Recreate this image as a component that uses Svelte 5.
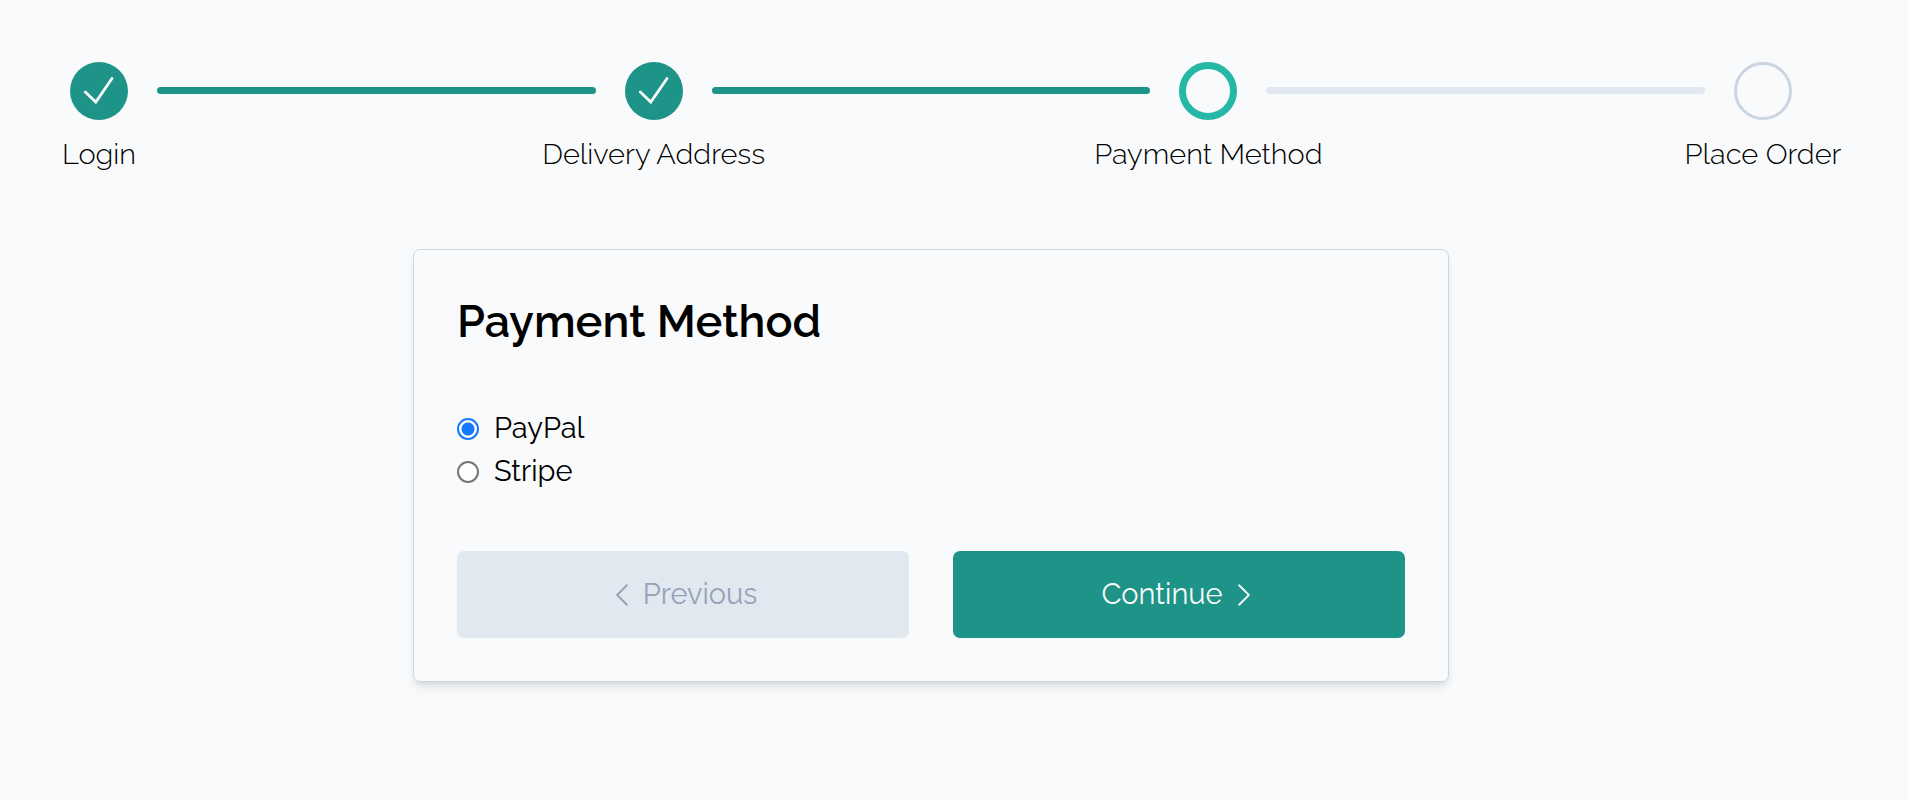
<script>
  const steps = [
    { label: 'Login', state: 'done' },
    { label: 'Delivery Address', state: 'done' },
    { label: 'Payment Method', state: 'current' },
    { label: 'Place Order', state: 'todo' },
  ];
  const methods = ['PayPal', 'Stripe'];
  let method = $state('PayPal');
</script>

<main>
  <ol class="steps">
    {#each steps as step, i}
      {#if i > 0}
        <li class="line" class:filled={steps[i - 1].state === 'done'} aria-hidden="true"></li>
      {/if}
      <li class="step" aria-current={step.state === 'current' ? 'step' : undefined}>
        <span class="circle {step.state}">
          {#if step.state === 'done'}
            <svg viewBox="0 0 58 58" aria-hidden="true">
              <path d="M15.3 30 L25.8 40 L42 16.5" />
            </svg>
          {/if}
        </span>
        <span class="label">{step.label}</span>
      </li>
    {/each}
  </ol>

  <form class="card" onsubmit={(e) => e.preventDefault()}>
    <h1>Payment Method</h1>
    <div class="options">
      {#each methods as name}
        <label>
          <input type="radio" name="method" value={name} bind:group={method} />
          {name}
        </label>
      {/each}
    </div>
    <div class="actions">
      <button type="button" class="previous">
        <svg viewBox="0 0 16 16" aria-hidden="true"><path d="M11 2 L5 8 L11 14" /></svg>
        Previous
      </button>
      <button type="submit" class="continue">
        Continue
        <svg viewBox="0 0 16 16" aria-hidden="true"><path d="M5 2 L11 8 L5 14" /></svg>
      </button>
    </div>
  </form>
</main>

<style>
  :global(body) {
    margin: 0;
    background: #f8fafc;
  }

  main {
    padding: 62px 116px 62px 70px;
    font-family: Raleway, Lato, sans-serif;
    font-size: 29px;
    line-height: 43px;
    color: #000;
  }

  .steps {
    display: flex;
    align-items: flex-start;
    gap: 29px;
    margin: 0 0 73px;
    padding: 0;
    list-style: none;
  }

  .step {
    flex: none;
    width: 58px;
    display: flex;
    flex-direction: column;
    align-items: center;
    gap: 13px;
  }

  .circle {
    box-sizing: border-box;
    width: 58px;
    height: 58px;
    border-radius: 50%;
  }

  .circle svg {
    display: block;
    fill: none;
    stroke: #f8fafc;
    stroke-width: 2.8;
    stroke-linecap: round;
    stroke-linejoin: miter;
  }

  .done {
    background: #1d9487;
  }

  .current {
    border: 7px solid #25b8a6;
  }

  .todo {
    border: 3px solid #cbd5e1;
  }

  .label {
    white-space: nowrap;
    font-weight: 300;
  }

  .line {
    flex: 1;
    height: 7px;
    margin-top: 25px;
    border-radius: 4px;
    background: #e1e8f0;
  }

  .line.filled {
    background: #1d9487;
  }

  .card {
    box-sizing: border-box;
    max-width: 1036px;
    margin: 0 auto;
    padding: 43px;
    border: 1px solid #cbd5e1;
    border-radius: 7px;
    box-shadow: 0 7px 11px -2px rgb(0 0 0 / 0.1), 0 4px 7px -4px rgb(0 0 0 / 0.1);
  }

  h1 {
    margin: 0 0 57px;
    font-size: 45px;
    line-height: 57px;
    font-weight: 600;
  }

  .options {
    display: flex;
    flex-direction: column;
    align-items: flex-start;
    margin-bottom: 58px;
  }

  .options label {
    display: flex;
    align-items: center;
    gap: 15px;
  }

  .options input {
    appearance: none;
    box-sizing: border-box;
    width: 22px;
    height: 22px;
    margin: 0;
    border: 2px solid #767676;
    border-radius: 50%;
    background: #fff;
  }

  .options input:checked {
    border-color: #1677ff;
    background: radial-gradient(circle, #1677ff 6px, #fff 7px);
  }

  .actions {
    display: grid;
    grid-template-columns: 1fr 1fr;
    gap: 44px;
  }

  button {
    display: flex;
    align-items: center;
    justify-content: center;
    gap: 8px;
    padding: 22px;
    border: 0;
    border-radius: 7px;
    font: inherit;
    cursor: pointer;
  }

  button svg {
    width: 26px;
    height: 26px;
    fill: none;
    stroke: currentColor;
    stroke-width: 1.1;
    stroke-linecap: round;
    stroke-linejoin: round;
  }

  .previous {
    background: #e1e8f0;
    color: #94a3b8;
  }

  .continue {
    background: #1d9487;
    color: #f8fafc;
  }
</style>
